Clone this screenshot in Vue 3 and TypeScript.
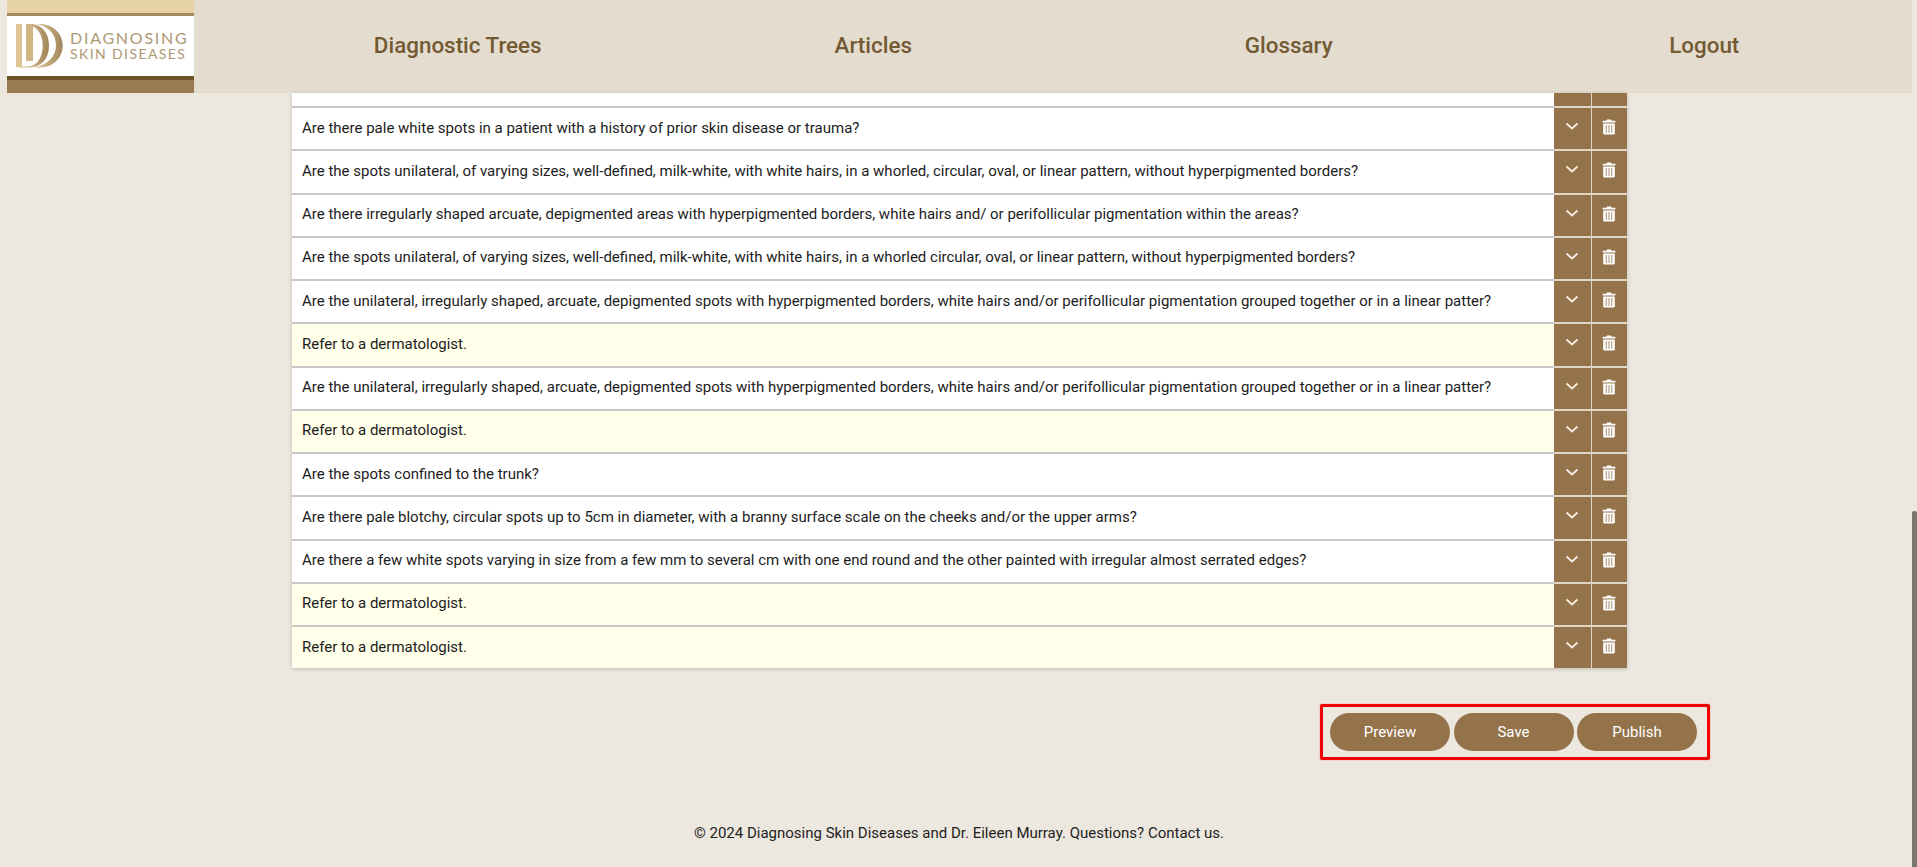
<template>
  <div class="page">
    <header class="top">
      <div class="logo">
        <div class="logo-cap"></div>
        <div class="logo-band">
          <svg class="logo-mark" viewBox="0 0 47 44" width="47" height="44">
            <defs>
              <linearGradient id="dd" x1="0" x2="1" y1="0" y2="0">
                <stop offset="0" stop-color="#e2cd9c" />
                <stop offset="1" stop-color="#a1855a" />
              </linearGradient>
            </defs>
            <rect x="0" y="0" width="6" height="43" fill="#dcc593" />
            <rect x="10" y="0" width="7" height="37" fill="#cfb683" />
            <path d="M10 0 H15 C28 1 33 11 33 21.5 C33 32 28 43 13 43.5 H2 V42.6 H13 C22 41.5 26.7 32 26.7 21.5 C26.7 11 22 1.5 10 0.8 Z" fill="url(#dd)" />
            <path d="M20 0 H25 C39 1 46.7 11 46.7 21.5 C46.7 32 39 43 25 43.5 H18 C32 41 40 32 40 21.5 C40 11 33 2 20 0 Z" fill="url(#dd)" />
          </svg>
          <div class="logo-text">
            <div class="logo-line1">DIAGNOSING</div>
            <div class="logo-line2">SKIN DISEASES</div>
          </div>
        </div>
      </div>
      <nav class="nav">
        <a v-for="item in navItems" :key="item">{{ item }}</a>
      </nav>
    </header>

    <main class="content">
      <div class="tree">
        <div class="row stub">
          <div class="row-text"></div>
          <div class="row-btn"></div>
          <div class="row-btn"></div>
        </div>
        <div v-for="(row, i) in rows" :key="i" class="row" :class="{ leaf: row.leaf }">
          <div class="row-text">{{ row.text }}</div>
          <button class="row-btn">
            <svg viewBox="0 0 14 14" width="14" height="14">
              <path d="M1.5 3.5 L7 8.5 L12.5 3.5" fill="none" stroke="#f6eee2" stroke-width="1.8" />
            </svg>
          </button>
          <button class="row-btn">
            <svg viewBox="0 0 14 16" width="14" height="16">
              <path d="M5 0.5 H9 L9.6 1.8 H13.4 V3.6 H0.6 V1.8 H4.4 Z" fill="#fff" />
              <path fill-rule="evenodd" d="M1.2 4.4 H12.8 V14.2 C12.8 15 12.2 15.6 11.4 15.6 H2.6 C1.8 15.6 1.2 15 1.2 14.2 Z M3.8 6 V14 H4.6 V6 Z M6.6 6 V14 H7.4 V6 Z M9.4 6 V14 H10.2 V6 Z" fill="#fff" />
            </svg>
          </button>
        </div>
      </div>

      <div class="actions-wrap">
        <div class="actions">
          <button v-for="label in actions" :key="label" class="action">{{ label }}</button>
        </div>
      </div>
    </main>

    <footer class="foot">© 2024 Diagnosing Skin Diseases and Dr. Eileen Murray. Questions? Contact us.</footer>
    <div class="scroll-thumb"></div>
  </div>
</template>

<script setup lang="ts">
interface TreeRow {
  text: string
  leaf?: boolean
}

const navItems = ['Diagnostic Trees', 'Articles', 'Glossary', 'Logout']
const actions = ['Preview', 'Save', 'Publish']

const refer = 'Refer to a dermatologist.'
const patter =
  'Are the unilateral, irregularly shaped, arcuate, depigmented spots with hyperpigmented borders, white hairs and/or perifollicular pigmentation grouped together or in a linear patter?'

const rows: TreeRow[] = [
  { text: 'Are there pale white spots in a patient with a history of prior skin disease or trauma?' },
  { text: 'Are the spots unilateral, of varying sizes, well-defined, milk-white, with white hairs, in a whorled, circular, oval, or linear pattern, without hyperpigmented borders?' },
  { text: 'Are there irregularly shaped arcuate, depigmented areas with hyperpigmented borders, white hairs and/ or perifollicular pigmentation within the areas?' },
  { text: 'Are the spots unilateral, of varying sizes, well-defined, milk-white, with white hairs, in a whorled circular, oval, or linear pattern, without hyperpigmented borders?' },
  { text: patter },
  { text: refer, leaf: true },
  { text: patter },
  { text: refer, leaf: true },
  { text: 'Are the spots confined to the trunk?' },
  { text: 'Are there pale blotchy, circular spots up to 5cm in diameter, with a branny surface scale on the cheeks and/or the upper arms?' },
  { text: 'Are there a few white spots varying in size from a few mm to several cm with one end round and the other painted with irregular almost serrated edges?' },
  { text: refer, leaf: true },
  { text: refer, leaf: true },
]
</script>

<style>
html,
body {
  margin: 0;
  overflow: hidden;
  background: #ede8df;
}
</style>

<style scoped>
.page {
  position: relative;
  height: 867px;
  display: flex;
  flex-direction: column;
  background: #ede8df;
  font-family: Roboto, "Liberation Sans", sans-serif;
  color: #1c1c1c;
  overflow: hidden;
}

.top {
  display: flex;
  height: 93px;
  flex: none;
  padding: 0 5px 0 7px;
}

.logo {
  width: 187px;
  flex: none;
  display: flex;
  flex-direction: column;
  background: #9a7b50;
}

.logo-cap {
  height: 13px;
  background: #e8d2a8;
}

.logo-band {
  box-sizing: border-box;
  height: 67px;
  display: flex;
  align-items: center;
  gap: 7px;
  padding-left: 9px;
  background: #fff;
  border-top: 3px solid #a58a5e;
  border-bottom: 4px solid #6f5428;
}

.logo-mark {
  flex: none;
}

.logo-text {
  color: #ad9873;
  font-family: Lato, "Open Sans", sans-serif;
  white-space: nowrap;
  line-height: 16px;
}

.logo-line1 {
  font-size: 16px;
  letter-spacing: 1.75px;
}

.logo-line2 {
  font-size: 14px;
  letter-spacing: 1.4px;
}

.nav {
  flex: 1;
  display: grid;
  grid-template-columns: repeat(4, 1fr);
  align-items: center;
  padding: 0 0 4px 56px;
  background: #e4dccf;
}

.nav a {
  text-align: center;
  color: #735a33;
  font-size: 22.4px;
  font-weight: 500;
}

.content {
  display: flex;
  flex-direction: column;
}

.tree {
  width: 1335px;
  margin-left: 292px;
  box-shadow: 0 1px 4px rgba(0, 0, 0, 0.2);
}

.row {
  display: flex;
  height: 43.25px;
  background: #fff;
}

.row.stub {
  height: 13px;
}

.row.leaf {
  background: #ffffea;
}

.row-text {
  flex: 1;
  box-sizing: border-box;
  padding: 0 0 2px 10px;
  display: flex;
  align-items: center;
  font-size: 15px;
  border-top: 2px solid #c8c8c8;
}

.row-btn {
  box-sizing: border-box;
  width: 37px;
  padding: 0 2px 3px 0;
  border: 0;
  border-top: 2px solid #e0d6c6;
  display: flex;
  align-items: center;
  justify-content: center;
  background: #94734a;
}

.row-btn + .row-btn {
  width: 36px;
  border-left: 1px solid #e0d6c6;
}

.stub .row-text,
.stub .row-btn {
  border-top: 0;
}

.actions-wrap {
  display: flex;
  justify-content: flex-end;
  padding: 36px 207px 0 0;
}

.actions {
  display: flex;
  gap: 3.5px;
  padding: 6px 10px 6px 7px;
  border: 3px solid #f40000;
  border-radius: 2px;
  box-shadow: 0 0 1px #f40000;
}

.action {
  width: 120px;
  height: 38px;
  border: 0;
  border-radius: 19px;
  background: #94734a;
  color: #fff;
  font-family: inherit;
  font-size: 15px;
}

.foot {
  margin-top: 64px;
  padding-left: 1px;
  text-align: center;
  font-size: 15px;
  color: #222;
}

.scroll-thumb {
  position: absolute;
  right: 0;
  top: 511px;
  width: 5px;
  bottom: 0;
  background: #7a756d;
  border-radius: 2px 2px 0 0;
}
</style>
